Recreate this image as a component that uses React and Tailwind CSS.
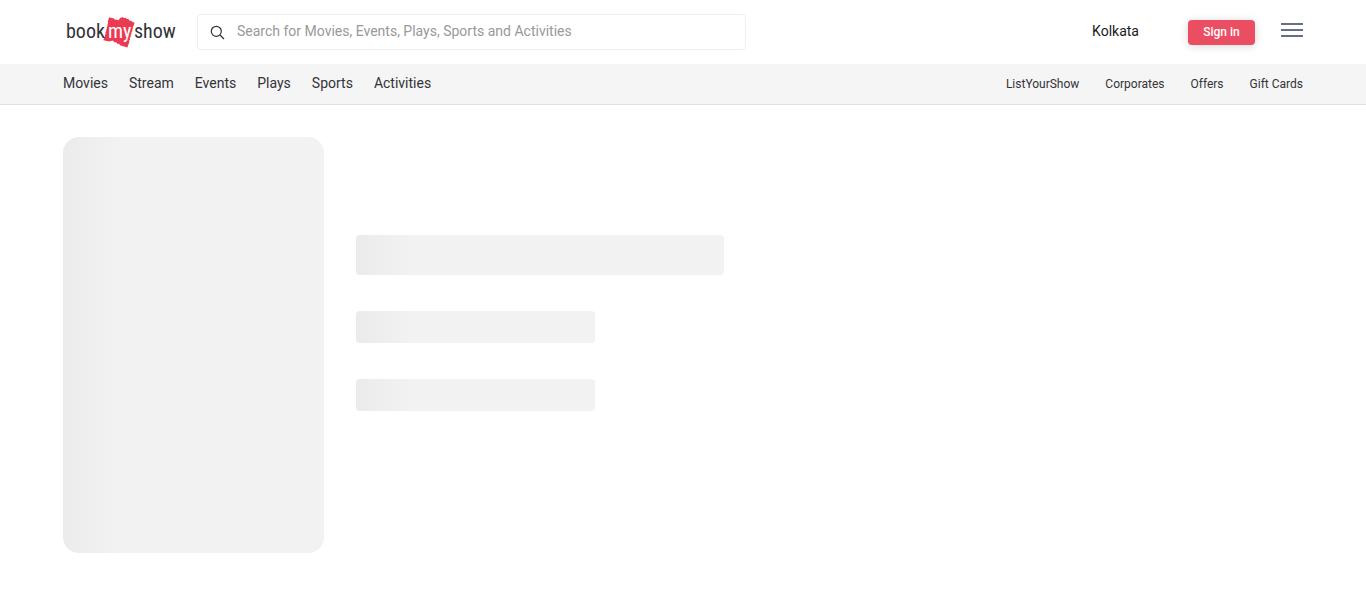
const mainLinks = ["Movies", "Stream", "Events", "Plays", "Sports", "Activities"];
const sideLinks = ["ListYourShow", "Corporates", "Offers", "Gift Cards"];

function Logo() {
  return (
    <svg width="114" height="36" viewBox="63 14 114 36" role="img" aria-label="bookmyshow">
      <path
        fill="#eb3b52"
        d="M109 17.3L114 18.6Q114.6 20.2 116.4 19.4L118.6 20.2L120.4 17.6Q122 18.4 122.6 16.8Q124.2 18.8 125.6 17.4Q126.6 19.6 128.4 18.8Q129.2 21.4 131 20.4Q132 22.6 134.6 22.4L133.6 26Q132.2 26.8 133 28.4Q131.6 29.4 132.4 31Q130.8 32 131.6 33.8Q130.2 34.8 130.8 36.6Q129.4 37.6 130 39.4Q128.6 40.4 129.2 42.2L127.4 47.4L119.8 45.2Q119.6 43.2 117.6 44.2Q116.8 41.6 114.8 42.6L112.6 40.6L109.4 41.6L103.4 40.2L104.2 37.4Q105.6 36.6 104.8 35Q106.2 34 105.4 32.4Q106.8 31.4 106 29.8Q107.4 28.8 106.8 27.2Q108 26.2 107.4 24.6Q108.6 23.6 107.8 21.8Z"
      />
      <g fontFamily="'Liberation Sans Narrow', 'Roboto Condensed', Roboto, sans-serif" fontSize="20">
        <text x="66" y="38" fill="#333338">book</text>
        <text x="108" y="38" fill="#ffffff">my</text>
        <text x="134" y="38" fill="#333338">show</text>
      </g>
    </svg>
  );
}

function Bone({ className }) {
  return (
    <div
      className={`bg-[#f2f2f2] bg-[linear-gradient(90deg,#ebebeb_0px,#f2f2f2_56px)] ${className}`}
    />
  );
}

export default function App() {
  return (
    <div className="min-h-screen bg-white font-['Roboto',sans-serif] text-[#333338]">
      <header>
        <div className="mx-auto flex h-16 max-w-[1240px] items-center">
          <a href="#home" className="block shrink-0">
            <Logo />
          </a>
          <label className="ml-5 flex h-9 w-[549px] items-center gap-3 rounded-sm border border-[#eeeeee] px-3">
            <svg width="15" height="15" viewBox="0 0 15 15" fill="none" stroke="#333338" strokeWidth="1.2" aria-hidden="true">
              <circle cx="6.3" cy="6.3" r="5" />
              <path d="M10 10L14 14" />
            </svg>
            <input
              type="text"
              aria-label="Search"
              placeholder="Search for Movies, Events, Plays, Sports and Activities"
              className="min-w-0 flex-1 pb-0.5 text-sm outline-none placeholder:text-[#999999]"
            />
          </label>
          <div className="ml-auto flex items-center">
            <button type="button" className="pb-0.5 text-sm text-[#1a1a1a]">Kolkata</button>
            <button
              type="button"
              className="ml-[49px] h-[25px] w-[67px] rounded-sm bg-[#eb4e62] text-xs font-medium text-white shadow-[0_1px_8px_rgba(0,0,0,0.16)]"
            >
              Sign in
            </button>
            <button type="button" aria-label="Menu" className="ml-[26px] flex w-[22px] flex-col gap-1 pb-1">
              <span className="h-0.5 bg-[#666f85]" />
              <span className="h-0.5 bg-[#666f85]" />
              <span className="h-0.5 bg-[#666f85]" />
            </button>
          </div>
        </div>
        <nav className="border-b border-[#e1e1e1] bg-[#f5f5f5]">
          <div className="mx-auto flex h-10 max-w-[1240px] items-center justify-between">
            <div className="flex gap-[21px] pb-0.5 text-sm">
              {mainLinks.map((name) => (
                <a key={name} href={`#${name}`}>{name}</a>
              ))}
            </div>
            <div className="flex gap-[26px] text-xs">
              {sideLinks.map((name) => (
                <a key={name} href={`#${name}`}>{name}</a>
              ))}
            </div>
          </div>
        </nav>
      </header>
      <main className="mx-auto flex max-w-[1240px] items-center gap-8 py-8" aria-busy="true">
        <Bone className="h-[416px] w-[261px] shrink-0 rounded-2xl" />
        <div className="flex flex-1 flex-col gap-9 pb-11">
          <Bone className="h-10 w-[368px] rounded-sm" />
          <Bone className="h-8 w-[239px] rounded-sm" />
          <Bone className="h-8 w-[239px] rounded-sm" />
        </div>
      </main>
    </div>
  );
}
